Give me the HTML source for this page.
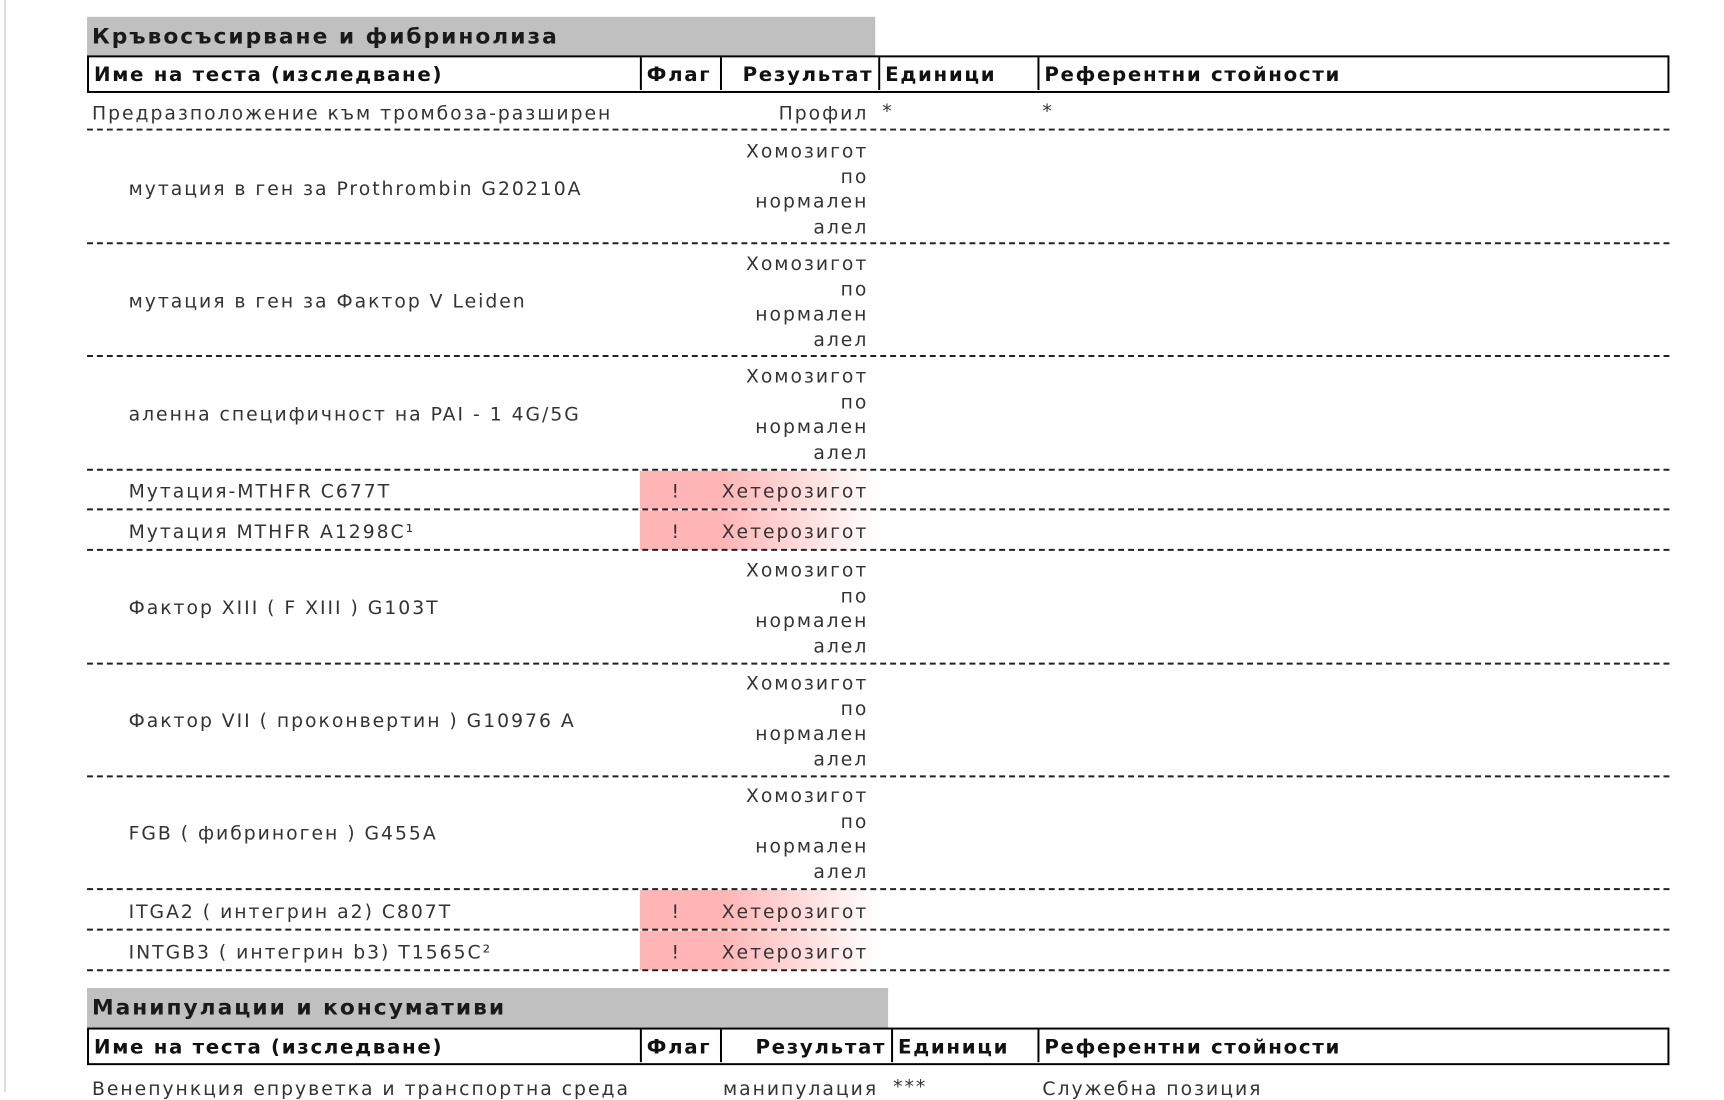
<!DOCTYPE html>
<html><head><meta charset="utf-8"><style>
body{margin:0;width:1724px;height:1092px;overflow:hidden;background:#fff;position:relative;font-family:"DejaVu Sans","Liberation Sans",sans-serif;color:#333;font-size:19px;letter-spacing:2px}
#w{position:absolute;left:0;top:0;width:1744px;height:1110px;transform:scale(0.989);transform-origin:0 0}
.a{position:absolute;white-space:nowrap;margin-top:2px}
.band{position:absolute;background:#c0c0c0;font-weight:bold;font-size:22px;letter-spacing:2px;padding-left:5px;box-sizing:border-box;line-height:42px;color:#1a1a1a}
.hdr{position:absolute;left:88px;width:1600px;height:38px;border:2.5px solid #000;box-sizing:border-box;font-weight:bold;color:#111;font-size:20px;letter-spacing:1.7px}
.hdr div{position:absolute;top:0;height:33px;line-height:35px;border-left:2px solid #000;padding:0 5px;box-sizing:border-box}
.dash{position:absolute;left:88px;width:1600px;border-top:2px dashed #222}
.pink{position:absolute;left:647px;width:240px;background:linear-gradient(to right,#ffb5b5 0,#ffb5b5 35%,#fff 100%)}
.r{text-align:right}
</style></head><body>
<div style="position:absolute;left:4px;top:0;width:2px;height:1092px;background:#ddd"></div>
<div id="w">
<div class="band" style="left:88px;top:17px;width:797px;height:39px">Кръвосъсирване и фибринолиза</div>
<div class="hdr" style="top:56px">
<div style="left:0;border-left:none">Име на теста (изследване)</div>
<div style="left:557px">Флаг</div>
<div style="left:638px;width:160px;text-align:right">Результат</div>
<div style="left:798px">Единици</div>
<div style="left:959px">Референтни стойности</div>
</div>

<div class="pink" style="top:476px;height:39px"></div>
<div class="pink" style="top:516px;height:40px"></div>
<div class="pink" style="top:900px;height:40px"></div>
<div class="pink" style="top:941px;height:40px"></div>

<div class="dash" style="top:130px"></div>
<div class="dash" style="top:245px"></div>
<div class="dash" style="top:359px"></div>
<div class="dash" style="top:474px"></div>
<div class="dash" style="top:514px"></div>
<div class="dash" style="top:555px"></div>
<div class="dash" style="top:670px"></div>
<div class="dash" style="top:784px"></div>
<div class="dash" style="top:898px"></div>
<div class="dash" style="top:939px"></div>
<div class="dash" style="top:980px"></div>

<div class="a" style="left:93px;top:102px">Предразположение към тромбоза-разширен</div>
<div class="a r" style="left:700px;width:178px;top:102px">Профил</div>
<div class="a" style="left:892px;top:100px">*</div>
<div class="a" style="left:1054px;top:100px">*</div>

<div class="a" style="left:130px;top:178px">мутация в ген за Prothrombin G20210A</div>
<div class="a r" style="left:700px;width:178px;top:139px;line-height:25.5px;white-space:normal">Хомозигот<br>по<br>нормален<br>алел</div>

<div class="a" style="left:130px;top:292px">мутация в ген за Фактор V Leiden</div>
<div class="a r" style="left:700px;width:178px;top:253px;line-height:25.5px">Хомозигот<br>по<br>нормален<br>алел</div>

<div class="a" style="left:130px;top:406px">аленна специфичност на PAI - 1 4G/5G</div>
<div class="a r" style="left:700px;width:178px;top:367px;line-height:25.5px">Хомозигот<br>по<br>нормален<br>алел</div>

<div class="a" style="left:130px;top:484px">Мутация-MTHFR C677T</div>
<div class="a" style="left:679px;top:484px">!</div>
<div class="a r" style="left:700px;width:178px;top:484px">Хетерозигот</div>
<div class="a" style="left:130px;top:525px">Мутация MTHFR A1298C¹</div>
<div class="a" style="left:679px;top:525px">!</div>
<div class="a r" style="left:700px;width:178px;top:525px">Хетерозигот</div>

<div class="a" style="left:130px;top:602px">Фактор XIII ( F XIII ) G103T</div>
<div class="a r" style="left:700px;width:178px;top:563px;line-height:25.5px">Хомозигот<br>по<br>нормален<br>алел</div>

<div class="a" style="left:130px;top:716px">Фактор VII ( проконвертин ) G10976 A</div>
<div class="a r" style="left:700px;width:178px;top:677px;line-height:25.5px">Хомозигот<br>по<br>нормален<br>алел</div>

<div class="a" style="left:130px;top:830px">FGB ( фибриноген ) G455A</div>
<div class="a r" style="left:700px;width:178px;top:791px;line-height:25.5px">Хомозигот<br>по<br>нормален<br>алел</div>

<div class="a" style="left:130px;top:909px">ITGA2 ( интегрин a2) C807T</div>
<div class="a" style="left:679px;top:909px">!</div>
<div class="a r" style="left:700px;width:178px;top:909px">Хетерозигот</div>
<div class="a" style="left:130px;top:950px">INTGB3 ( интегрин b3) T1565C²</div>
<div class="a" style="left:679px;top:950px">!</div>
<div class="a r" style="left:700px;width:178px;top:950px">Хетерозигот</div>

<div class="band" style="left:88px;top:999px;width:810px;height:40px">Манипулации и консумативи</div>
<div class="hdr" style="top:1039px">
<div style="left:0;border-left:none">Име на теста (изследване)</div>
<div style="left:557px">Флаг</div>
<div style="left:638px;width:173px;text-align:right">Результат</div>
<div style="left:811px">Единици</div>
<div style="left:959px">Референтни стойности</div>
</div>
<div class="a" style="left:93px;top:1088px">Венепункция епруветка и транспортна среда</div>
<div class="a" style="left:731px;top:1088px">манипулация</div>
<div class="a" style="left:903px;top:1086px">***</div>
<div class="a" style="left:1054px;top:1088px">Служебна позиция</div>
</div>
</body></html>
